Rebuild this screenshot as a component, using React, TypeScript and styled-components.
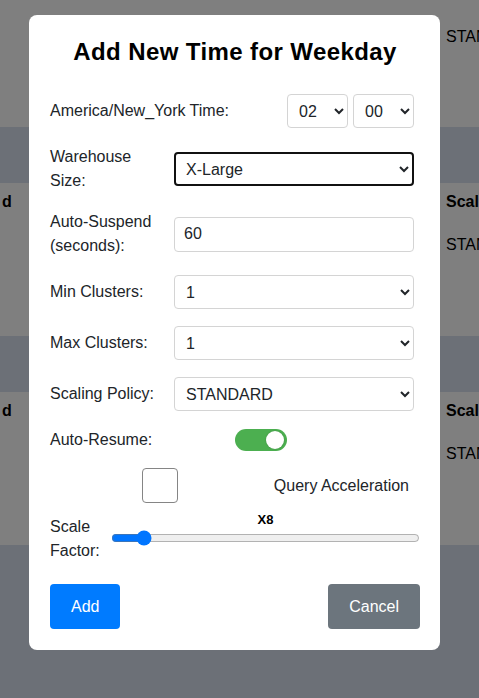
import React from "react";
import styled, { createGlobalStyle } from "styled-components";

const Global = createGlobalStyle`
  html, body { margin: 0; padding: 0; }
  body { font-family: "Liberation Sans", Arial, sans-serif; color: #212529; }
  * { box-sizing: border-box; }
`;

/* ---------- page behind the dialog ---------- */
const Page = styled.div`
  height: 100vh;
  overflow: hidden;
  background: #ffffff;
  display: flex;
  flex-direction: column;
  white-space: nowrap;
`;

const TableBody = styled.div<{ $h: number; $pt: number }>`
  height: ${(p) => p.$h}px;
  flex-shrink: 0;
  padding-top: ${(p) => p.$pt}px;
  background: #ffffff;
`;

const Band = styled.div<{ $fill?: boolean }>`
  height: 56px;
  flex: ${(p) => (p.$fill ? "1 0 auto" : "0 0 auto")};
  background: #d8e0ee;
`;

const TRow = styled.div<{ $head?: boolean; $mt?: number }>`
  display: grid;
  grid-template-columns: 446px 240px;
  line-height: 22px;
  font-size: 16px;
  color: #000;
  font-weight: ${(p) => (p.$head ? 700 : 400)};
  margin-top: ${(p) => p.$mt ?? 0}px;
`;

const LeftCell = styled.div`
  padding-left: 2px;
`;

/* ---------- dialog ---------- */
const Overlay = styled.div`
  position: fixed;
  inset: 0;
  background: rgba(0, 0, 0, 0.5);
  display: flex;
  align-items: flex-start;
  justify-content: flex-start;
  padding: 15px 0 0 29px;
`;

const Modal = styled.div`
  width: 411px;
  background: #fff;
  border-radius: 8px;
  padding: 20px 20px 21px 21px;
  display: flex;
  flex-direction: column;
`;

const Title = styled.h2`
  margin: 3px 0 28px;
  font-size: 24px;
  line-height: 28px;
  font-weight: 700;
  letter-spacing: 0.4px;
  color: #000;
  text-align: center;
`;

const FieldRow = styled.div<{ $mt?: number }>`
  display: grid;
  grid-template-columns: 110px 240px;
  column-gap: 14px;
  align-items: center;
  margin-top: ${(p) => p.$mt ?? 17}px;
`;

const TimeRow = styled.div`
  display: flex;
  align-items: center;
  justify-content: space-between;
  width: 364px;
`;

const Label = styled.label`
  font-size: 16px;
  line-height: 24px;
  color: #212529;
`;

const Select = styled.select<{ $w?: number; $focus?: boolean }>`
  width: ${(p) => (p.$w ? `${p.$w}px` : "100%")};
  height: 34px;
  font-family: "Liberation Sans", Arial, sans-serif;
  font-size: 16px;
  color: #212529;
  background: #fff;
  border: ${(p) => (p.$focus ? "2px solid #111" : "1px solid #d4d4d4")};
  border-radius: 4px;
  padding: ${(p) => (p.$focus ? "0 6px" : "0 7px")};
  outline: none;
`;

const TimeSelects = styled.div`
  display: flex;
  gap: 5px;
`;

const TextInput = styled.input`
  width: 100%;
  height: 35px;
  font-family: "Liberation Sans", Arial, sans-serif;
  font-size: 16px;
  color: #212529;
  border: 1px solid #d4d4d4;
  border-radius: 4px;
  padding: 0 9px;
  outline: none;
`;

const ToggleCell = styled.div`
  padding-left: 61px;
  display: flex;
  align-items: center;
`;

const Toggle = styled.span<{ $on: boolean }>`
  position: relative;
  width: 52px;
  height: 22px;
  border-radius: 11px;
  background: ${(p) => (p.$on ? "#4caf50" : "#ccc")};
  display: inline-block;
`;

const Knob = styled.span<{ $on: boolean }>`
  position: absolute;
  top: 2px;
  left: ${(p) => (p.$on ? "31px" : "3px")};
  width: 18px;
  height: 18px;
  border-radius: 50%;
  background: #fff;
  box-shadow: 0 0 2px rgba(0, 0, 0, 0.2);
`;

const CheckRow = styled.div`
  display: flex;
  align-items: center;
  justify-content: space-between;
  padding: 0 11px 0 92px;
  margin-top: 16px;
`;

const Check = styled.input`
  appearance: none;
  -webkit-appearance: none;
  width: 36px;
  height: 35px;
  margin: 0;
  border: 1px solid #858585;
  border-radius: 4px;
  background: #fff;
`;

const CheckText = styled.span`
  font-size: 16px;
  line-height: 24px;
  color: #212529;
`;

const ScaleRow = styled.div`
  display: flex;
  align-items: flex-start;
  gap: 6px;
  margin-top: 9px;
`;

const ScaleLabel = styled(Label)`
  padding-top: 3px;
  flex: 0 0 55px;
`;

const SliderGroup = styled.div`
  flex: 1;
  display: flex;
  flex-direction: column;
  align-items: center;
`;

const ScaleValue = styled.span`
  font-size: 13px;
  line-height: 15px;
  font-weight: 700;
  color: #000;
`;

const Range = styled.input`
  width: 100%;
  height: 16px;
  margin: 3px 0 0;
`;

const Buttons = styled.div`
  display: flex;
  justify-content: space-between;
  margin-top: 21px;
`;

const Button = styled.button<{ $variant: "primary" | "secondary" }>`
  height: 45px;
  padding: 0 21px;
  border: none;
  border-radius: 4px;
  font-family: "Liberation Sans", Arial, sans-serif;
  font-size: 16px;
  color: #fff;
  background: ${(p) => (p.$variant === "primary" ? "#007bff" : "#6c757d")};
`;

const hours = Array.from({ length: 24 }, (_, i) => String(i).padStart(2, "0"));
const minutes = ["00", "15", "30", "45"];
const sizes = ["X-Small", "Small", "Medium", "Large", "X-Large", "2X-Large", "3X-Large", "4X-Large"];
const clusters = ["1", "2", "3", "4", "5", "6", "7", "8", "9", "10"];

export default function App() {
  return (
    <>
      <Global />
      <Page>
        <TableBody $h={127} $pt={26}>
          <TRow>
            <LeftCell />
            <div>STANDARD</div>
          </TRow>
        </TableBody>
        <Band />
        <TableBody $h={153} $pt={8}>
          <TRow $head>
            <LeftCell>d</LeftCell>
            <div>Scaling Policy</div>
          </TRow>
          <TRow $mt={21}>
            <LeftCell />
            <div>STANDARD</div>
          </TRow>
        </TableBody>
        <Band />
        <TableBody $h={153} $pt={8}>
          <TRow $head>
            <LeftCell>d</LeftCell>
            <div>Scaling Policy</div>
          </TRow>
          <TRow $mt={21}>
            <LeftCell />
            <div>STANDARD</div>
          </TRow>
        </TableBody>
        <Band $fill />
      </Page>

      <Overlay>
        <Modal>
          <Title>Add New Time for Weekday</Title>

          <TimeRow>
            <Label>America/New_York Time:</Label>
            <TimeSelects>
              <Select $w={61} defaultValue="02">
                {hours.map((h) => (
                  <option key={h}>{h}</option>
                ))}
              </Select>
              <Select $w={61} defaultValue="00">
                {minutes.map((m) => (
                  <option key={m}>{m}</option>
                ))}
              </Select>
            </TimeSelects>
          </TimeRow>

          <FieldRow>
            <Label>Warehouse Size:</Label>
            <Select $focus defaultValue="X-Large">
              {sizes.map((s) => (
                <option key={s}>{s}</option>
              ))}
            </Select>
          </FieldRow>

          <FieldRow>
            <Label>Auto-Suspend (seconds):</Label>
            <TextInput type="text" defaultValue="60" />
          </FieldRow>

          <FieldRow>
            <Label>Min Clusters:</Label>
            <Select defaultValue="1">
              {clusters.map((c) => (
                <option key={c}>{c}</option>
              ))}
            </Select>
          </FieldRow>

          <FieldRow>
            <Label>Max Clusters:</Label>
            <Select defaultValue="1">
              {clusters.map((c) => (
                <option key={c}>{c}</option>
              ))}
            </Select>
          </FieldRow>

          <FieldRow>
            <Label>Scaling Policy:</Label>
            <Select defaultValue="STANDARD">
              <option>STANDARD</option>
              <option>ECONOMY</option>
            </Select>
          </FieldRow>

          <FieldRow>
            <Label>Auto-Resume:</Label>
            <ToggleCell>
              <Toggle $on>
                <Knob $on />
              </Toggle>
            </ToggleCell>
          </FieldRow>

          <CheckRow>
            <Check type="checkbox" />
            <CheckText>Query Acceleration</CheckText>
          </CheckRow>

          <ScaleRow>
            <ScaleLabel>Scale Factor:</ScaleLabel>
            <SliderGroup>
              <ScaleValue>X8</ScaleValue>
              <Range type="range" min={0} max={93} defaultValue={8} />
            </SliderGroup>
          </ScaleRow>

          <Buttons>
            <Button $variant="primary">Add</Button>
            <Button $variant="secondary">Cancel</Button>
          </Buttons>
        </Modal>
      </Overlay>
    </>
  );
}
